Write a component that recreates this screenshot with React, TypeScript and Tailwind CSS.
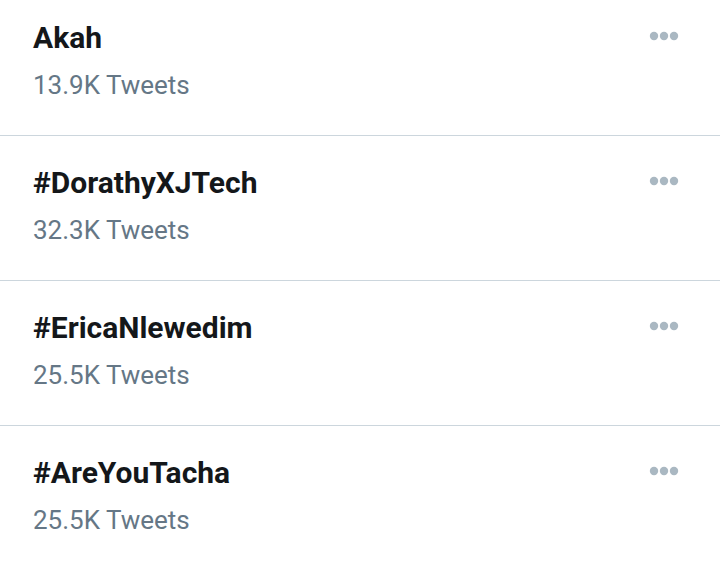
import React from "react";

interface Trend {
  name: string;
  count: string;
}

const trends: Trend[] = [
  { name: "Akah", count: "13.9K" },
  { name: "#DorathyXJTech", count: "32.3K" },
  { name: "#EricaNlewedim", count: "25.5K" },
  { name: "#AreYouTacha", count: "25.5K" },
];

const MoreDots = () => (
  <svg className="w-[30px] h-[10px]" viewBox="0 0 30 10" aria-hidden="true">
    <circle cx="5" cy="5" r="4.2" fill="#aab8c2" />
    <circle cx="15" cy="5" r="4.2" fill="#aab8c2" />
    <circle cx="25" cy="5" r="4.2" fill="#aab8c2" />
  </svg>
);

const App: React.FC = () => {
  return (
    <div
      className="w-[720px] h-[566px] overflow-hidden bg-white"
      style={{ fontFamily: "Roboto, 'Noto Sans', sans-serif" }}
    >
      {trends.map((t, index) => (
        <div
          key={index}
          className="flex justify-between border-b border-[#ccd6dd] pl-[33px] pr-[41px] pt-[29px] pb-[35px] first:pt-[20px]"
        >
          <div className="flex flex-col">
            <span className="text-[30px] leading-[36px] font-bold text-[#14171a]">
              {t.name}
            </span>
            <span className="mt-[14px] text-[26px] leading-[30px] text-[#657786]">
              {t.count} Tweets
            </span>
          </div>
          <div className="pt-[11px]">
            <MoreDots />
          </div>
        </div>
      ))}
    </div>
  );
};

export default App;
